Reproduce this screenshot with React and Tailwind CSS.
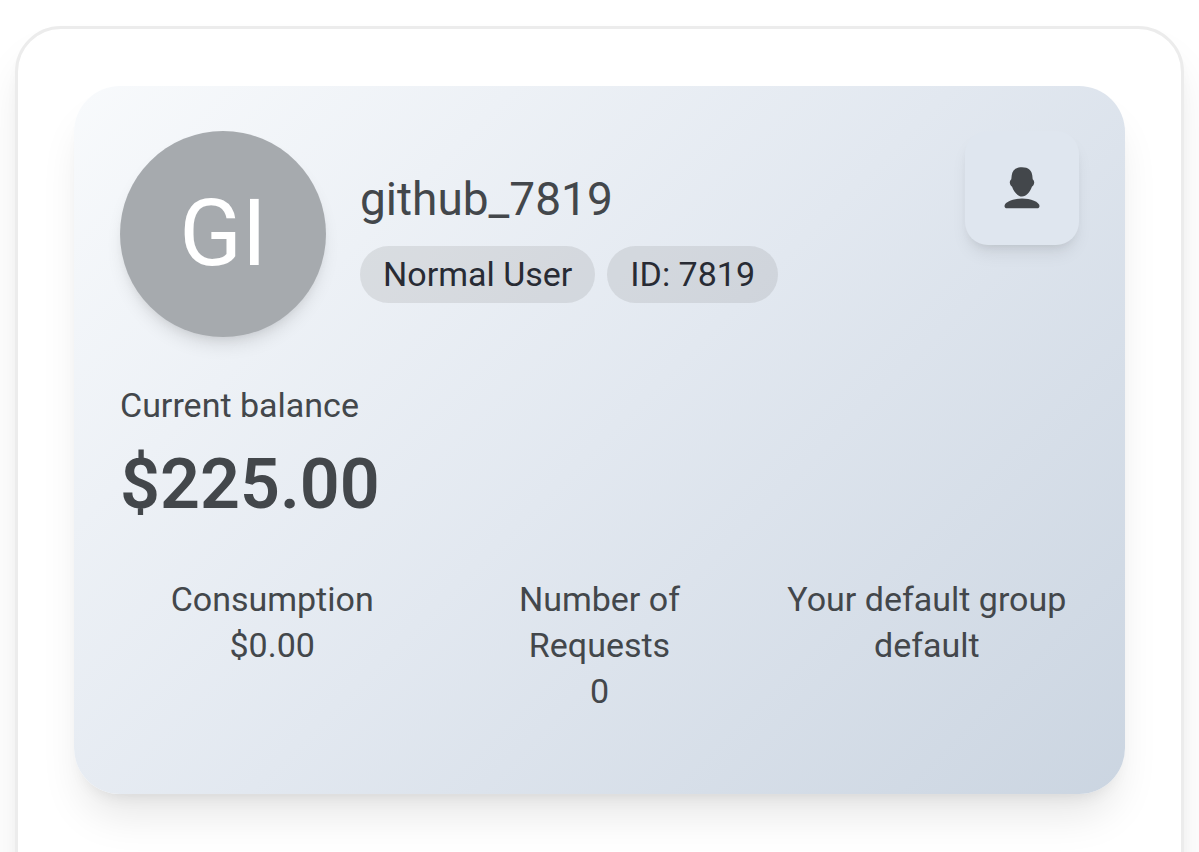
const stats = [
  { label: 'Consumption', value: '$0.00' },
  { label: 'Number of Requests', value: '0' },
  { label: 'Your default group', value: 'default' },
];

function UserIcon() {
  return (
    <svg viewBox="0 0 36 42" className="h-[42px] w-9" fill="currentColor" aria-hidden="true">
      <path d="M18 .3C11.500 .3 8.300 3.500 7.700 8.500L7.300 12.200C6.200 13.200 5.700 14.600 5.800 15.800C6 17.600 6.900 19 8.100 19.800C9.600 24.500 13.800 29.600 18 29.600S26.400 24.500 27.900 19.800C29.100 19 30 17.600 30.200 15.800C30.300 14.600 29.800 13.200 28.700 12.200L28.300 8.500C27.700 3.500 24.500 .3 18 .3z" />
      <path d="M18 31.500C9.500 31.500.5 35 .5 39c0 1.500 1 2.300 2.500 2.300h30c1.500 0 2.500-.8 2.500-2.300 0-4-9-7.500-17.500-7.500z" />
    </svg>
  );
}

function Tag({ children }) {
  return (
    <span className="rounded-full bg-[#6b6b6b]/15 px-[23px] py-[5px] leading-[47px] text-[#282b34]">
      {children}
    </span>
  );
}

export default function App() {
  return (
    <main className="h-screen overflow-hidden bg-white px-[15px] pt-[26px] font-[Roboto,sans-serif] text-[34px] leading-[46px] text-[#43474b]">
      <div className="rounded-[46px] border-3 border-[#ececec] bg-white px-14 pt-[57px] pb-40 shadow-[0_29px_43px_-3px_rgba(0,0,0,0.08),0_11px_17px_-8px_rgba(0,0,0,0.08)]">
        <section className="rounded-[46px] bg-linear-[135deg,#f8fafc_0%,#e2e8f0_50%,#cbd5e1_100%] px-[46px] pt-[45px] pb-20 shadow-[0_29px_43px_-9px_rgba(0,0,0,0.1),0_11px_17px_-11px_rgba(0,0,0,0.1)]">
          <header className="flex items-start justify-between">
            <div className="flex items-center gap-[34px]">
              <div className="flex size-[206px] shrink-0 items-center justify-center rounded-full bg-[#a6aaae] text-[92px] text-white shadow-[0_11px_17px_-3px_rgba(0,0,0,0.1),0_6px_11px_-6px_rgba(0,0,0,0.1)]">
                GI
              </div>
              <div>
                <h1 className="mb-3 text-[46px] leading-[69px]">github_7819</h1>
                <div className="flex gap-3">
                  <Tag>Normal User</Tag>
                  <Tag>ID: 7819</Tag>
                </div>
              </div>
            </div>
            <button
              type="button"
              aria-label="User profile"
              className="flex size-[114px] shrink-0 items-center justify-center rounded-[23px] bg-[#dfe6ef] shadow-[0_11px_17px_-3px_rgba(0,0,0,0.08),0_6px_11px_-6px_rgba(0,0,0,0.1)]"
            >
              <UserIcon />
            </button>
          </header>

          <div className="mt-[45px]">
            <p>Current balance</p>
            <p className="mt-[11px] text-[70px] leading-[91px] font-semibold">$225.00</p>
          </div>

          <dl className="mt-[46px] grid grid-cols-3 gap-[23px] text-center">
            {stats.map((stat) => (
              <div key={stat.label}>
                <dt>{stat.label}</dt>
                <dd>{stat.value}</dd>
              </div>
            ))}
          </dl>
        </section>
      </div>
    </main>
  );
}
